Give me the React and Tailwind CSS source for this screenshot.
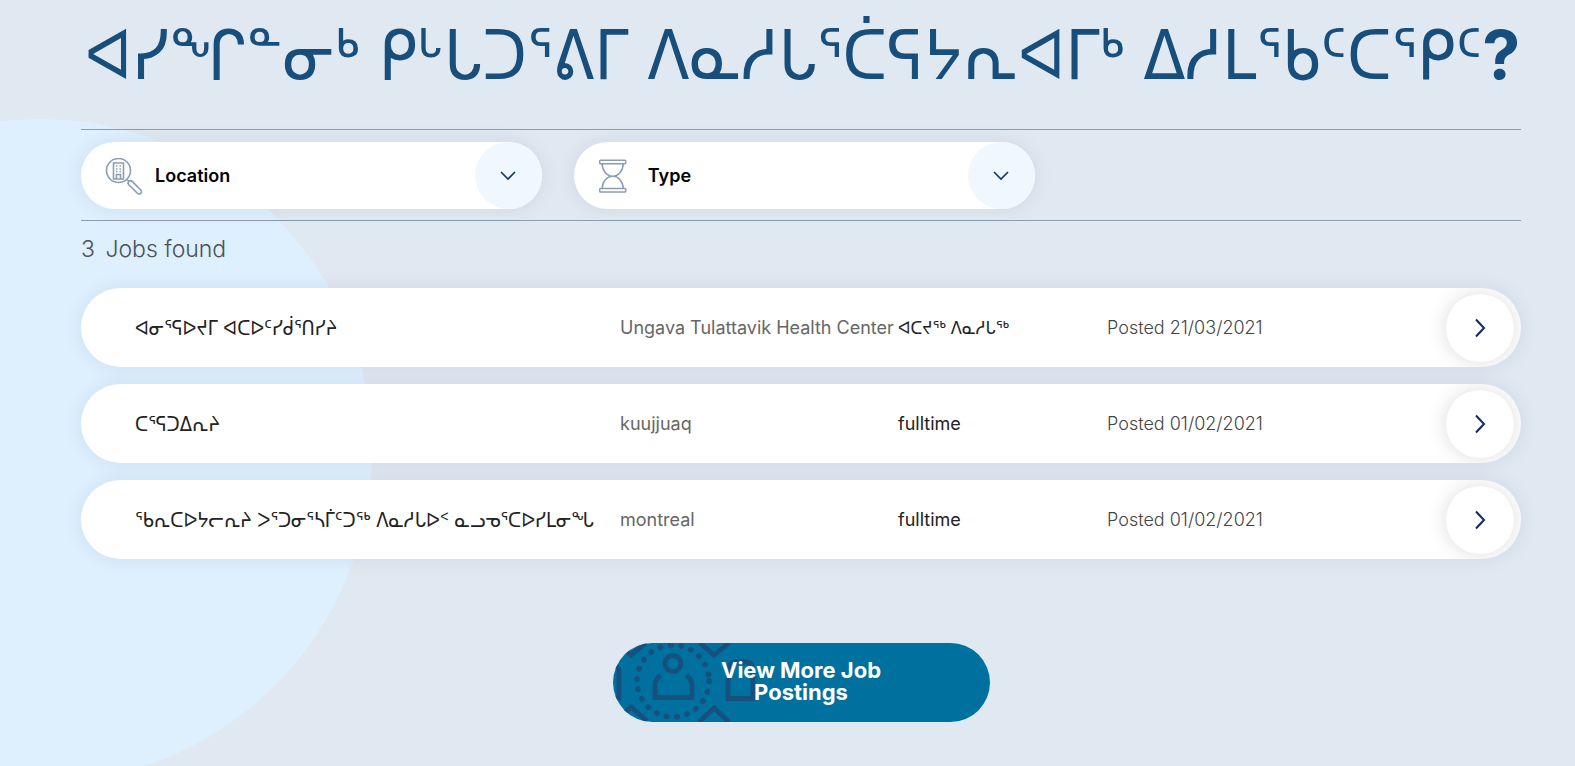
import React, { useState } from 'react';

const jobs = [
  { id: 1, title: 'ᐊᓂᕐᕋᐅᔪᒥ ᐊᑕᐅᑦᓯᑰᕐᑎᓯᔨ', location: 'Ungava Tulattavik Health Center', type: 'ᐊᑕᔪᖅ ᐱᓇᓱᒐᖅ', posted: '21/03/2021' },
  { id: 2, title: 'ᑕᕐᕋᑐᐃᕆᔨ', location: 'kuujjuaq', type: 'fulltime', posted: '01/02/2021' },
  { id: 3, title: 'ᖃᕆᑕᐅᔭᓕᕆᔨ ᐳᕐᑐᓂᕐᓴᒦᑦᑐᖅ ᐱᓇᓱᒐᐅᑉ ᓇᓗᓀᕐᑕᐅᓯᒪᓂᖓ', location: 'montreal', type: 'fulltime', posted: '01/02/2021' },
];

const SearchBuildingIcon = ({ title }) => (
  <svg width="38" height="38" viewBox="0 0 38 38" fill="none" stroke="#8a9db3" strokeWidth="1.6" role="img">
    <title>{title}</title>
    <circle cx="13.500" cy="12.500" r="12" />
    <path d="M8.500 21V5h10v16zM11.500 20.500v-4h4v4" />
    <path d="M11 8h1.500M14.500 8h1.500M11 11h1.500M14.500 11h1.500M11 13.500h1.500M14.500 13.500h1.500" />
    <path d="M22 21.500l2 2" />
    <path d="M23.800 26.700a2.300 2.300 0 0 1 3.400-3.300l8.600 8.600a2.300 2.300 0 0 1-3.400 3.300z" />
  </svg>
);

const HourglassIcon = ({ title }) => (
  <svg width="38" height="38" viewBox="0 0 38 38" fill="none" stroke="#8a9db3" strokeWidth="1.5" role="img">
    <title>{title}</title>
    <rect x="1.700" y="2.200" width="26" height="3.600" rx="0.800" />
    <rect x="1.700" y="30.500" width="26" height="3.600" rx="0.800" />
    <path d="M4.200 5.800c0 6.500 4.500 12.400 10.500 12.400S25.200 12.300 25.200 5.800M4.200 30.500c0-6.500 4.500-12.300 10.500-12.300S25.200 24 25.200 30.500" />
  </svg>
);

const ButtonPattern = () => (
  <svg className="absolute left-0 top-0 h-full" viewBox="0 0 160 79" fill="none" stroke="#15507f" strokeWidth="4.8" aria-hidden="true">
    <circle cx="60" cy="38" r="36" strokeLinecap="round" strokeWidth="5.500" strokeDasharray="0.600 9.824" />
    <circle cx="60" cy="20.500" r="8" />
    <path d="M47.500 32c-2.500 3-5.500 5-5.500 9v13.500h37V41c0-4-3-6-5.500-9" />
    <path d="M3 0l15 12L33 0M3 78l15-14 16 14M87 0l14 12L116 0M86 79l15-14 15 14" />
    <path d="M0 23c4 0 6 2 6 5v27H0M140 55.500h-25V28c0-6 3-9 8-9h9c5 0 8 3 8 9z" />
  </svg>
);

const FilterSelect = ({ id, label, Icon, options }) => {
  const [value, setValue] = useState('');

  return (
    <div className="relative w-[32%]">
      <label htmlFor={id} className="absolute left-6 top-4">
        <Icon title={label} />
      </label>
      <select
        id={id}
        value={value}
        onChange={(e) => setValue(e.target.value)}
        className="h-[67px] w-full appearance-none rounded-full bg-white pl-[74px] pr-20 text-lg font-semibold text-black shadow-[0_0_20px_rgba(0,60,90,0.08)]"
      >
        <option value="">{label}</option>
        {options.map((option) => (
          <option key={option} value={option}>{option}</option>
        ))}
      </select>
      <span className="pointer-events-none absolute right-0 top-0 flex h-[67px] w-[67px] items-center justify-center rounded-full bg-[#f0f8ff]">
        <svg width="16" height="10" viewBox="0 0 16 10" fill="none" stroke="#12365f" strokeWidth="1.6" aria-hidden="true">
          <path d="M1 1l7 7 7-7" />
        </svg>
      </span>
    </div>
  );
};

const JobRow = ({ job }) => (
  <li className="grid h-[79px] grid-cols-[485fr_278fr_209fr_339fr_auto] items-center overflow-hidden rounded-full bg-white pl-[54px] pr-[7px] text-lg text-[#666] shadow-[0_0_20px_rgba(0,60,90,0.08)]">
    <span className="whitespace-nowrap text-xl text-[#222]">{job.title}</span>
    <span className="whitespace-nowrap">{job.location}</span>
    <span className="whitespace-nowrap text-[#222]">{job.type}</span>
    <span className="whitespace-nowrap font-light text-[#444]">Posted {job.posted}</span>
    <a
      href={`#job-${job.id}`}
      aria-label={job.title}
      className="flex h-[68px] w-[68px] items-center justify-center rounded-full bg-white shadow-[0_0_20px_rgba(0,0,0,0.14)]"
    >
      <svg width="12" height="20" viewBox="0 0 12 20" fill="none" stroke="#0d2c5c" strokeWidth="2" aria-hidden="true">
        <path d="M2 1.500l8 8.500-8 8.500" />
      </svg>
    </a>
  </li>
);

const App = () => {
  return (
    <div className="relative min-h-screen overflow-hidden bg-[#e0e8f1] font-['Inter','DejaVu_Sans_Condensed','DejaVu_Sans',sans-serif]">
      <div className="absolute -left-[292px] top-[119px] h-[664px] w-[664px] rounded-full bg-[#deeffd]" />

      <main className="relative pl-[81px] pr-[54px] pt-3">
        <h1 className="whitespace-nowrap pl-1 text-[68px] leading-[84px] text-[#184e7b]">
          ᐊᓯᖏᓐᓂᒃ ᑭᒡᒐᑐᕐᕕᒥ ᐱᓇᓱᒐᕐᑖᕋᔭᕆᐊᒥᒃ ᐃᓱᒪᖃᑦᑕᕿᑦ<span className="font-bold">?</span>
        </h1>

        {/* Filters */}
        <div className="mt-[33px] flex gap-8 border-y border-[#8a9db3] pt-3 pb-[11px]">
          <FilterSelect id="location" label="Location" Icon={SearchBuildingIcon} options={['kuujjuaq', 'montreal']} />
          <FilterSelect id="type" label="Type" Icon={HourglassIcon} options={['fulltime']} />
        </div>

        <p className="mt-3 text-[23px] leading-8 font-light text-[#4b5158]">
          3 <span className="ml-1">Jobs found</span>
        </p>

        {/* Results */}
        <ul className="mt-[23px] space-y-[17px]">
          {jobs.map((job) => (
            <JobRow key={job.id} job={job} />
          ))}
        </ul>

        <div className="mt-[84px] flex justify-center">
          <button
            type="button"
            className="relative h-[79px] w-[377px] overflow-hidden rounded-full bg-[#00719f] px-24 pb-1 text-[22px] leading-[22px] font-bold text-white"
          >
            <ButtonPattern />
            <span className="relative">View More Job Postings</span>
          </button>
        </div>
      </main>
    </div>
  );
};

export default App;
